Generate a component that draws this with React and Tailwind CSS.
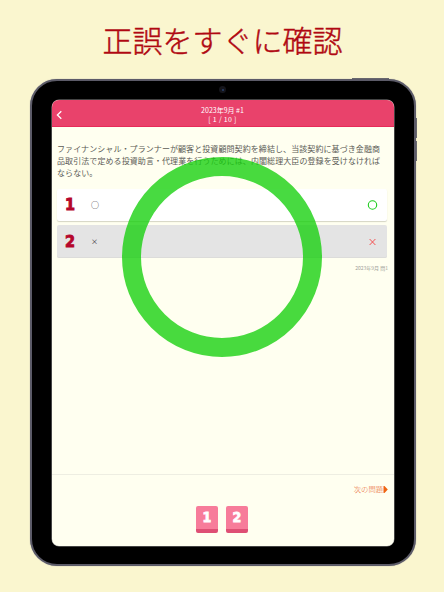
const digit = "font-['DejaVu_Sans_Condensed','DejaVu_Sans'] font-bold leading-none";

function Answer({ number, label, correct }) {
  return (
    <div
      className={`flex w-[330px] items-center rounded-[2px] ${
        correct
          ? 'h-[32px] bg-white shadow-[0_1px_1px_#d5d5c4]'
          : 'h-[33px] bg-[#e4e4e4] shadow-[inset_0_-1px_0_#dcdcda]'
      }`}
    >
      <span
        className={`${digit} w-[34px] pl-[8px] text-[16px] text-[#b5062c] [-webkit-text-stroke:0.9px_#b5062c]`}
      >
        {number}
      </span>
      {correct ? (
        <span className="w-[8px] text-[8px] leading-none text-[#222]">{label}</span>
      ) : (
        <span className="w-[8px] text-[7px] leading-none text-[#222]">{label}</span>
      )}
      <svg className="ml-auto mr-[9px]" width="11" height="10" viewBox="0 0 11 10" fill="none">
        {correct ? (
          <circle cx="5.5" cy="5" r="4.2" stroke="#1ccc1c" strokeWidth="1.1" />
        ) : (
          <path d="M2.6 2L8.4 8M8.4 2L2.6 8" stroke="#f54343" strokeWidth="0.9" />
        )}
      </svg>
    </div>
  );
}

function KeyButton({ children }) {
  return (
    <button
      className={`${digit} flex h-[27px] w-[22px] justify-center rounded-[2px] border-b-4 border-[#de4f74] bg-[#f77c9a] pt-[4px] text-[14px] text-white [-webkit-text-stroke:0.8px_white]`}
    >
      {children}
    </button>
  );
}

export default function App() {
  return (
    <main className="flex h-[592px] w-[444px] flex-col items-center overflow-hidden bg-[#faf6cf] font-['Noto_Sans_CJK_JP',sans-serif]">
      <h1 className="ml-[1px] mt-[19px] h-[60px] whitespace-nowrap text-[30px] font-light leading-[40px] text-[#b00812] [-webkit-text-stroke:0.45px_#b00812]">
        正誤をすぐに確認
      </h1>
      <div className="relative ml-[2px] h-[487px] w-[386px] rounded-[27px] border-2 border-[#5c5b68] bg-black px-[20px] pt-[19px] shadow-[0_0_1px_#888890]">
        <span className="absolute right-[25px] top-[-3px] h-px w-[37px] bg-[#68676d]" />
        <span className="absolute right-[-3px] top-[37px] h-[20px] w-px bg-[#68676d]" />
        <span className="absolute right-[-3px] top-[60px] h-[20px] w-px bg-[#68676d]" />
        <span className="absolute left-[187px] top-[5px] flex h-[7px] w-[7px] items-center justify-center rounded-full bg-[#15151b]">
          <span className="h-[2px] w-[2px] rounded-full bg-[#28406d]" />
        </span>
        <section className="relative flex h-[446px] w-[342px] flex-col overflow-hidden rounded-[7px] bg-[#fffff0] shadow-[0_0_0_0.5px_#888]">
          <header className="flex h-[27px] shrink-0 items-center border-b border-[#e62b59] bg-[#e9426b] text-white">
            <svg className="ml-[4px] mt-[3px]" width="7" height="10" viewBox="0 0 7 10" fill="none">
              <path d="M5.3 1.2L1.4 5L5.3 8.8" stroke="white" strokeWidth="1.3" />
            </svg>
            <div className="mr-[12px] mt-[4px] flex-1 text-center text-[7px] leading-[9px]">
              <p>2023年9月 #1</p>
              <p className="tracking-[0.3px]">[ 1 / 10 ]</p>
            </div>
          </header>
          <p className="ml-[5px] mt-[16px] h-[46px] whitespace-nowrap text-[8px] font-normal leading-[12px] tracking-[0.08px] text-[#5c5c56]">
            ファイナンシャル・プランナーが顧客と投資顧問契約を締結し、当該契約に基づき金融商
            <br />
            品取引法で定める投資助言・代理業を行うためには、内閣総理大臣の登録を受けなければ
            <br />
            ならない。
          </p>
          <div className="ml-[5px] flex flex-col gap-[4px]">
            <Answer number="1" label="○" correct />
            <Answer number="2" label="×" />
          </div>
          <p className="mr-[6px] mt-[6px] text-right text-[5px] leading-[7px] text-[#a0a099]">
            2023年9月 問1
          </p>
          <footer className="mt-auto flex h-[72px] shrink-0 flex-col items-center border-t border-[#eeeee2]">
            <a className="mr-[6px] mt-[8px] flex h-[12px] items-center self-end text-[7.3px] font-light leading-[12px] text-[#e9602c]">
              次の問題
              <svg width="5" height="7" viewBox="0 0 5 7">
                <path d="M0.5 0H1.5L4.8 3.5L1.5 7H0.5Z" fill="#ef6412" />
              </svg>
            </a>
            <div className="mt-[11px] flex gap-[8px] pr-[2px]">
              <KeyButton>1</KeyButton>
              <KeyButton>2</KeyButton>
            </div>
          </footer>
          <div className="absolute left-[70px] top-[57.4px] h-[200px] w-[200px] rounded-full border-[19px] border-[#14d00c]/78" />
        </section>
      </div>
    </main>
  );
}
